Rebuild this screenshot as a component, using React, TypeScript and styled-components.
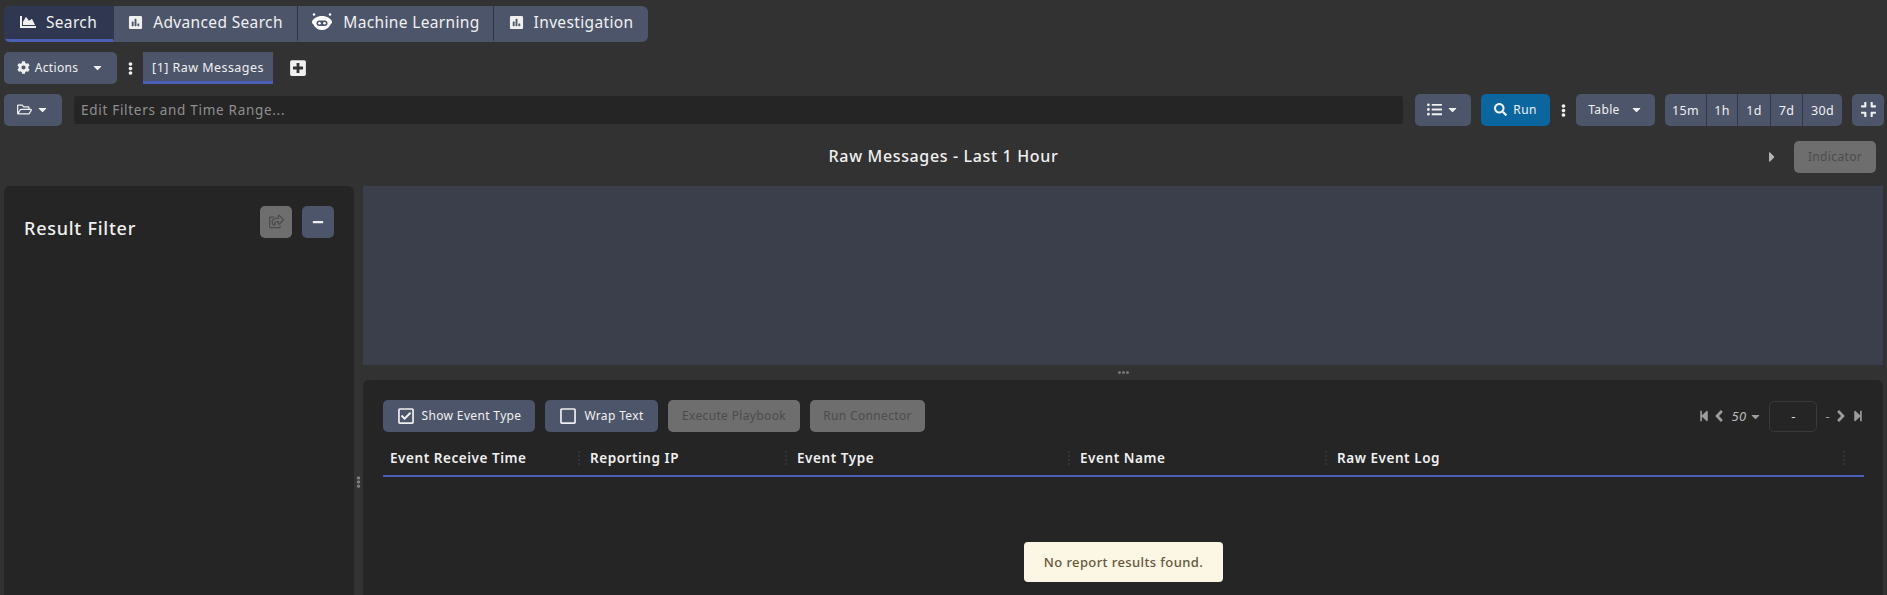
import React from "react";
import styled, { createGlobalStyle } from "styled-components";
import {
  FaAngleLeft,
  FaAngleRight,
  FaCaretDown,
  FaCaretRight,
  FaChartArea,
  FaCog,
  FaCompress,
  FaEllipsisV,
  FaListUl,
  FaMinus,
  FaPlusSquare,
  FaPoll,
  FaRegCheckSquare,
  FaRegFolderOpen,
  FaRegShareSquare,
  FaRegSquare,
  FaSearch,
  FaStepBackward,
  FaStepForward,
} from "react-icons/fa";

const colors = {
  page: "#323232",
  panel: "#252525",
  button: "#4d556a",
  buttonActive: "#2f3850",
  disabled: "#6e6e6e",
  disabledText: "#4c4c4c",
  blue: "#4a5fb5",
  run: "#0b659f",
  pane: "#3a3f4b",
  text: "#f0f0f0",
};

const GlobalStyle = createGlobalStyle`
  html, body {
    margin: 0;
    height: 595px;
    overflow: hidden;
    background: ${colors.page};
    color: ${colors.text};
    font-family: "Noto Sans", "DejaVu Sans", sans-serif;
    letter-spacing: 0.35px;
  }
  * { box-sizing: border-box; }
`;

const Page = styled.div`
  width: 1887px;
  height: 595px;
  overflow: hidden;
  display: flex;
  flex-direction: column;
  padding: 6px 0 0 4px;
`;

const TabBar = styled.div`
  display: flex;
  width: 644px;
  height: 36px;
  border-radius: 6px;
  overflow: hidden;
  background: ${colors.button};
`;

const MainTab = styled.div<{ $width: number; $active?: boolean }>`
  width: ${(p) => p.$width}px;
  padding-bottom: 1px;
  display: flex;
  align-items: center;
  justify-content: center;
  gap: 10px;
  font-size: 15.5px;
  letter-spacing: 0.35px;
  background: ${(p) => (p.$active ? colors.buttonActive : "transparent")};
  border-bottom: 3px solid ${(p) => (p.$active ? colors.blue : "transparent")};
  border-right: 1px solid ${(p) => (p.$active ? "transparent" : "#2f3442")};
  &:last-child { border-right: 0; }
  svg { flex: none; }
`;

const Row = styled.div`
  display: flex;
  align-items: center;
  height: 32px;
  margin-top: 10px;
`;

const Button = styled.div<{ $width: number; $bg?: string; $gap?: number; $left?: number; $disabled?: boolean }>`
  flex: none;
  width: ${(p) => p.$width}px;
  height: 32px;
  margin-left: ${(p) => p.$left ?? 0}px;
  padding-bottom: 1px;
  display: flex;
  align-items: center;
  justify-content: center;
  gap: ${(p) => p.$gap ?? 6}px;
  border-radius: 5px;
  font-size: 12px;
  background: ${(p) => (p.$disabled ? colors.disabled : p.$bg ?? colors.button)};
  color: ${(p) => (p.$disabled ? colors.disabledText : colors.text)};
`;

const Kebab = styled.div<{ $width: number }>`
  flex: none;
  width: ${(p) => p.$width}px;
  display: flex;
  justify-content: center;
  font-size: 13px;
  color: #f0f0f0;
`;

const SubTab = styled.div`
  width: 130px;
  height: 32px;
  padding-top: 1px;
  display: flex;
  align-items: center;
  justify-content: center;
  font-size: 12.5px;
  letter-spacing: 0.45px;
  background: ${colors.button};
  border-bottom: 3px solid ${colors.blue};
`;

const AddTab = styled.div`
  margin-left: 16px;
  display: flex;
  font-size: 18px;
`;

const FilterInput = styled.div`
  flex: none;
  width: 1329px;
  height: 28px;
  margin: 0 12px;
  padding-left: 7px;
  display: flex;
  align-items: center;
  border-radius: 3px;
  background: ${colors.panel};
  color: #8f8f8f;
  font-size: 13.5px;
  letter-spacing: 0.7px;
`;

const RangeGroup = styled.div`
  flex: none;
  display: flex;
  height: 32px;
  margin-left: 10px;
  border-radius: 5px;
  overflow: hidden;
  background: ${colors.button};
`;

const RangeItem = styled.div<{ $width: number }>`
  width: ${(p) => p.$width}px;
  display: flex;
  align-items: center;
  justify-content: center;
  font-size: 12.5px;
  border-right: 1px solid #333846;
  &:last-child { border-right: 0; }
`;

const TitleRow = styled.div`
  display: flex;
  align-items: center;
  height: 32px;
  margin-top: 15px;
`;

const Title = styled.div`
  width: 1879px;
  margin-right: -1879px;
  padding-bottom: 2px;
  text-align: center;
  font-size: 16px;
  font-weight: 500;
  letter-spacing: 0.65px;
`;

const IndicatorSide = styled.div`
  margin-left: 1760px;
  display: flex;
  align-items: center;
  gap: 14px;
  color: #b4b4b4;
  font-size: 16px;
`;

const Workspace = styled.div`
  flex: 1;
  min-height: 0;
  display: flex;
  margin-top: 13px;
`;

const FilterPanel = styled.aside`
  flex: none;
  width: 350px;
  padding: 20px 20px 0;
  border-radius: 6px 6px 0 0;
  background: ${colors.panel};
  display: flex;
  align-items: flex-start;
  justify-content: space-between;
`;

const PanelTitle = styled.h2`
  margin: 11px 0 0;
  font-size: 18px;
  font-weight: 500;
  line-height: 22px;
  letter-spacing: 0.75px;
`;

const PanelActions = styled.div`
  display: flex;
  gap: 10px;
`;

const SideGutter = styled.div`
  flex: none;
  width: 9px;
  padding-top: 290px;
  display: flex;
  justify-content: center;
  font-size: 12px;
  color: #7d7d7d;
`;

const Main = styled.main`
  flex: none;
  width: 1520px;
  display: flex;
  flex-direction: column;
`;

const ChartPane = styled.div`
  flex: none;
  height: 179px;
  background: ${colors.pane};
`;

const Splitter = styled.div`
  flex: none;
  height: 15px;
  display: flex;
  align-items: center;
  justify-content: center;
  gap: 1px;
`;

const Dot = styled.span`
  width: 3px;
  height: 3px;
  border-radius: 50%;
  background: #777;
`;

const ResultsPanel = styled.section`
  flex: 1;
  padding: 20px 19px 0 20px;
  border-radius: 6px 6px 0 0;
  background: ${colors.panel};
  display: flex;
  flex-direction: column;
`;

const Toolbar = styled.div`
  display: flex;
  align-items: center;
  gap: 10px;
`;

const Pager = styled.div`
  margin-left: auto;
  display: flex;
  align-items: center;
  color: #9c9c9c;
  font-size: 13px;
`;

const PageSize = styled.span`
  font-style: italic;
  margin: 0 3px 0 3px;
  color: #b8b8b8;
`;

const PageBox = styled.div`
  width: 48px;
  height: 31px;
  margin: 0 8px 0 7px;
  display: flex;
  align-items: center;
  justify-content: center;
  border: 1.5px solid #3a3a3a;
  border-radius: 5px;
  color: #ddd;
`;

const HeaderRow = styled.div`
  height: 45px;
  display: flex;
  border-bottom: 2px solid ${colors.blue};
`;

const HeaderCell = styled.div<{ $width: number }>`
  flex: none;
  width: ${(p) => p.$width}px;
  padding: 9px 0 0 7px;
  display: flex;
  align-items: center;
  justify-content: space-between;
  font-size: 13.5px;
  font-weight: 600;
  letter-spacing: 0.55px;
  color: #f0f0f0;
`;

const Grip = styled.span`
  width: 2px;
  height: 14px;
  margin-right: 3px;
  border-left: 2px dotted #343434;
`;

const EmptyRow = styled.div`
  display: flex;
  justify-content: center;
  margin-top: 65px;
`;

const Notice = styled.div`
  width: 199px;
  height: 40px;
  display: flex;
  align-items: center;
  justify-content: center;
  border-radius: 4px;
  background: #fcf6e4;
  color: #66563a;
  font-size: 13px;
  font-weight: 500;
  letter-spacing: 0.4px;
`;

const RobotIcon = () => (
  <svg width="22" height="20" viewBox="0 0 22 20" fill="#fff">
    <circle cx="3" cy="2.5" r="1.3" />
    <circle cx="19" cy="2.5" r="1.3" />
    <path d="M11 4c5 0 9 2.600 10 5.500.4 1.200-.4 2-1.300 2.700C18 16 15 18 11 18s-7-2-8.700-5.800C1.400 11.500.6 10.700 1 9.500 2 6.600 6 4 11 4z" />
    <rect x="5.500" y="8.500" width="11" height="5.500" rx="2.700" fill="#4d556a" />
    <circle cx="8.500" cy="11.200" r="1.300" />
    <circle cx="13.500" cy="11.200" r="1.300" />
  </svg>
);

const columns = [
  { label: "Event Receive Time", width: 200 },
  { label: "Reporting IP", width: 207 },
  { label: "Event Type", width: 283 },
  { label: "Event Name", width: 257 },
  { label: "Raw Event Log", width: 518 },
];

const ranges = [
  { label: "15m", width: 42 },
  { label: "1h", width: 31 },
  { label: "1d", width: 33 },
  { label: "7d", width: 32 },
  { label: "30d", width: 39 },
];

export default function App() {
  return (
    <Page>
      <GlobalStyle />
      <TabBar>
        <MainTab $width={110} $active>
          <FaChartArea size={16} />
          Search
        </MainTab>
        <MainTab $width={184}>
          <FaPoll size={15} />
          Advanced Search
        </MainTab>
        <MainTab $width={196}>
          <RobotIcon />
          Machine Learning
        </MainTab>
        <MainTab $width={154}>
          <FaPoll size={15} />
          Investigation
        </MainTab>
      </TabBar>

      <Row>
        <Button $width={113} $gap={5}>
          <FaCog size={13} />
          Actions
          <FaCaretDown size={13} style={{ marginLeft: 8 }} />
        </Button>
        <Kebab $width={26}>
          <FaEllipsisV />
        </Kebab>
        <SubTab>[1] Raw Messages</SubTab>
        <AddTab>
          <FaPlusSquare />
        </AddTab>
      </Row>

      <Row>
        <Button $width={58} $gap={4}>
          <FaRegFolderOpen size={15} />
          <FaCaretDown size={13} />
        </Button>
        <FilterInput>Edit Filters and Time Range...</FilterInput>
        <Button $width={56} $gap={4}>
          <FaListUl size={15} />
          <FaCaretDown size={13} />
        </Button>
        <Button $width={69} $bg={colors.run} $left={10}>
          <FaSearch size={13} />
          Run
        </Button>
        <Kebab $width={26}>
          <FaEllipsisV />
        </Kebab>
        <Button $width={79} $gap={10}>
          Table
          <FaCaretDown size={13} />
        </Button>
        <RangeGroup>
          {ranges.map((r) => (
            <RangeItem key={r.label} $width={r.width}>
              {r.label}
            </RangeItem>
          ))}
        </RangeGroup>
        <Button $width={32} $left={10}>
          <FaCompress size={17} />
        </Button>
      </Row>

      <TitleRow>
        <Title>Raw Messages - Last 1 Hour</Title>
        <IndicatorSide>
          <FaCaretRight />
          <Button $width={82} $disabled>
            Indicator
          </Button>
        </IndicatorSide>
      </TitleRow>

      <Workspace>
        <FilterPanel>
          <PanelTitle>Result Filter</PanelTitle>
          <PanelActions>
            <Button $width={32} $disabled>
              <FaRegShareSquare size={15} />
            </Button>
            <Button $width={32}>
              <FaMinus size={12} />
            </Button>
          </PanelActions>
        </FilterPanel>
        <SideGutter>
          <FaEllipsisV />
        </SideGutter>
        <Main>
          <ChartPane />
          <Splitter>
            <Dot />
            <Dot />
            <Dot />
          </Splitter>
          <ResultsPanel>
            <Toolbar>
              <Button $width={152} $gap={7}>
                <FaRegCheckSquare size={18} />
                Show Event Type
              </Button>
              <Button $width={113} $gap={7}>
                <FaRegSquare size={18} />
                Wrap Text
              </Button>
              <Button $width={132} $disabled>
                Execute Playbook
              </Button>
              <Button $width={115} $disabled>
                Run Connector
              </Button>
              <Pager>
                <FaStepBackward size={12} />
                <FaAngleLeft size={18} />
                <PageSize>50</PageSize>
                <FaCaretDown size={13} />
                <PageBox>-</PageBox>
                -
                <FaAngleRight size={18} style={{ marginLeft: 2 }} />
                <FaStepForward size={12} style={{ marginLeft: 2 }} />
              </Pager>
            </Toolbar>
            <HeaderRow>
              {columns.map((c) => (
                <HeaderCell key={c.label} $width={c.width}>
                  {c.label}
                  <Grip />
                </HeaderCell>
              ))}
            </HeaderRow>
            <EmptyRow>
              <Notice>No report results found.</Notice>
            </EmptyRow>
          </ResultsPanel>
        </Main>
      </Workspace>
    </Page>
  );
}
